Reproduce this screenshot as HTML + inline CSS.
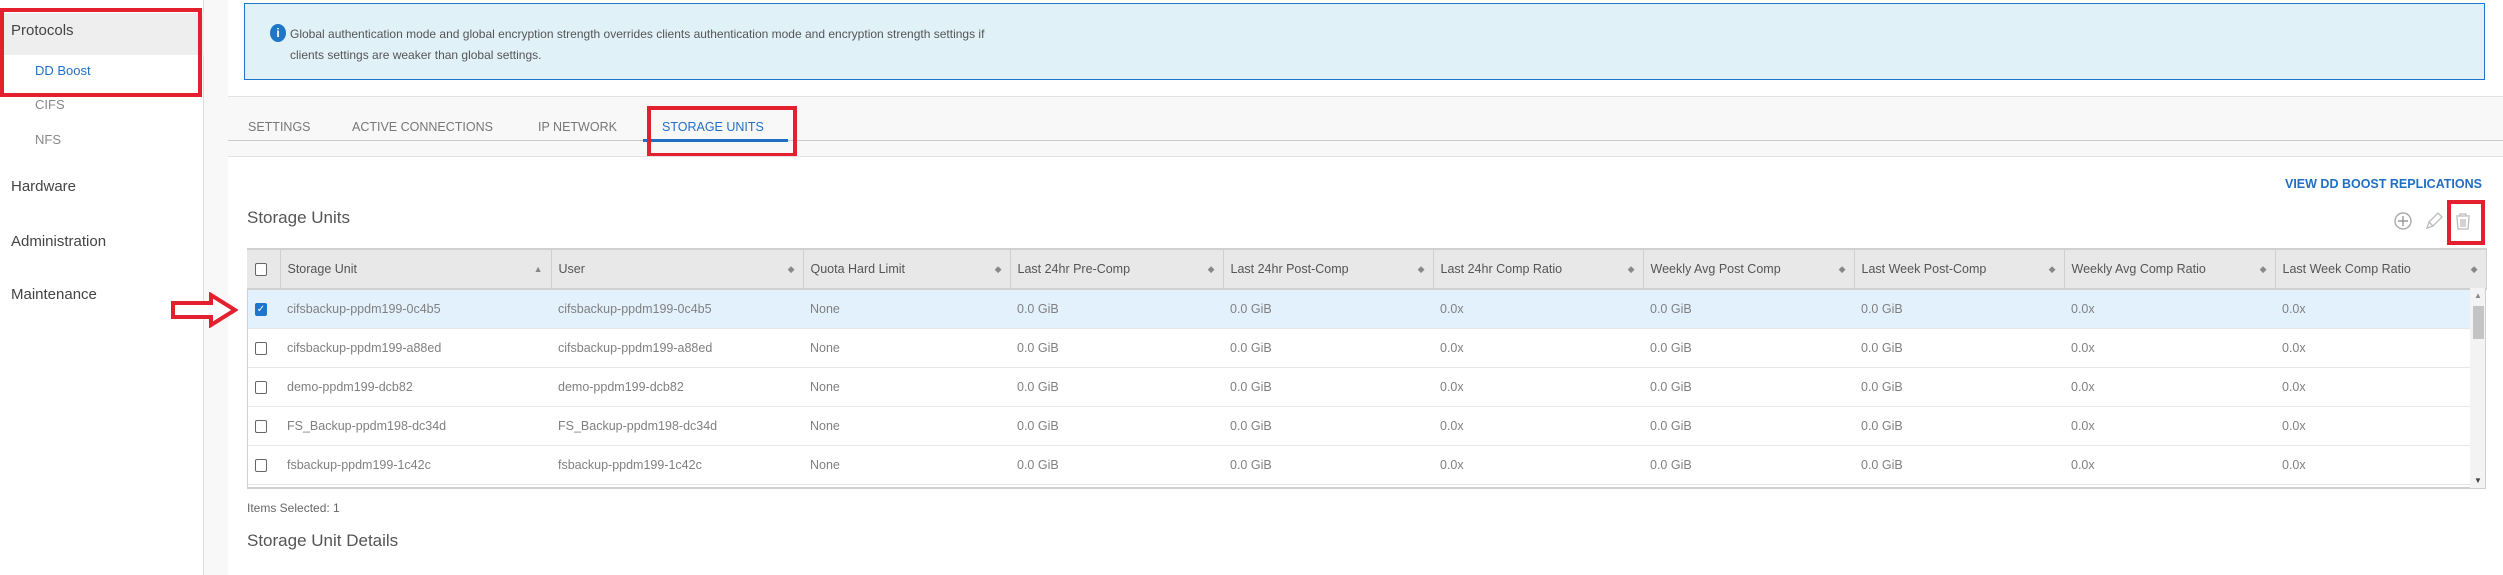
<!DOCTYPE html>
<html><head><meta charset="utf-8"><style>
*{box-sizing:border-box;margin:0;padding:0}
body{width:2503px;height:575px;overflow:hidden;background:#f8f8f8;font-family:"Liberation Sans",sans-serif;position:relative;color:#555}
.abs{position:absolute}
#side{left:0;top:0;width:204px;height:575px;background:#fff;border-right:1px solid #ddd}
.nav{position:absolute;font-size:15px;color:#444}
.sub{position:absolute;font-size:13px;color:#888}
.red{position:absolute;border:4px solid #e5202e}
#p1{left:228px;top:0;width:2275px;height:97px;background:#fff;border-bottom:1px solid #e2e2e2}
#info{left:244px;top:3px;width:2241px;height:77px;background:#e1f1f8;border:1.5px solid #1f75c8}
#info .t{position:absolute;left:45px;top:20px;font-size:12px;line-height:21px;color:#555}
.tab{position:absolute;top:120px;font-size:12.5px;color:#777}
#p2{left:228px;top:156px;width:2275px;height:419px;background:#fff;border-top:1px solid #e2e2e2}
table{position:absolute;left:247px;top:248px;border-collapse:collapse;table-layout:fixed;font-size:12.5px}
th{background:#e8e8e8;height:40px;text-align:left;font-weight:normal;color:#555;border-right:1.5px solid #d0d0d0;border-top:2px solid #d0d0d0;border-bottom:2px solid #d0d0d0;padding-left:7px;position:relative}
th .s{position:absolute;right:8px;top:14px;font-size:9px;color:#888}
td{height:39px;border-bottom:1.5px solid #e6e6e6;padding-left:7px;color:#808080}
tr.sel td{background:#e3f1fd}
.cb{display:inline-block;width:12px;height:13px;border:1.3px solid #666;border-radius:2px;vertical-align:middle;margin-left:8px;background:#fff}
.cb.on{background:#1f75c8;border-color:#1f75c8;color:#fff;font-size:10px;line-height:11px;text-align:center}
</style></head><body>
<div id="side" class="abs">
<div class="abs" style="left:0;top:13px;width:204px;height:42px;background:#eee"></div>
<div class="nav" style="left:11px;top:22px">Protocols</div>
<div class="sub" style="left:35px;top:63px;color:#1f6fc4">DD Boost</div>
<div class="sub" style="left:35px;top:97px">CIFS</div>
<div class="sub" style="left:35px;top:132px">NFS</div>
<div class="nav" style="left:11px;top:178px">Hardware</div>
<div class="nav" style="left:11px;top:233px">Administration</div>
<div class="nav" style="left:11px;top:286px">Maintenance</div>
</div>
<div class="red" style="left:0;top:8px;width:202px;height:89px"></div>
<div id="p1" class="abs"></div>
<div id="info" class="abs">
<div class="abs" style="left:25px;top:20px;width:16px;height:18px;border-radius:50%;background:#1f75c8;color:#fff;font-size:12px;font-weight:bold;text-align:center;line-height:18px">i</div>
<div class="t">Global authentication mode and global encryption strength overrides clients authentication mode and encryption strength settings if<br>clients settings are weaker than global settings.</div>
</div>
<div class="abs" style="left:228px;top:140px;width:2275px;height:1px;background:#ccc"></div>
<div class="tab" style="left:248px">SETTINGS</div>
<div class="tab" style="left:352px">ACTIVE CONNECTIONS</div>
<div class="tab" style="left:538px">IP NETWORK</div>
<div class="tab" style="left:662px;color:#1f6fc4">STORAGE UNITS</div>
<div class="abs" style="left:643px;top:139px;width:145px;height:3px;background:#1f6fc4"></div>
<div class="red" style="left:647px;top:106px;width:150px;height:51px"></div>
<div id="p2" class="abs"></div>
<div class="abs" style="right:21px;top:177px;font-size:12.5px;font-weight:bold;color:#1f6fc4">VIEW DD BOOST REPLICATIONS</div>
<div class="abs" style="left:247px;top:208px;font-size:17px;color:#555">Storage Units</div>
<svg class="abs" style="left:2394px;top:211px" width="90" height="20" viewBox="0 0 90 20"><circle cx="9" cy="10" r="8" fill="none" stroke="#aaa" stroke-width="1.4"/><path d="M9 5v10M4 10h10" stroke="#999" stroke-width="1.4"/><path d="M33 17l2-6 9-9 4 4-9 9z M35 11l4 4" fill="none" stroke="#bbb" stroke-width="1.3"/><path d="M62 5h14M66 5V3h6v2M63 6l1 12h10l1-12M67 8v8M69 8v8M71 8v8" fill="none" stroke="#bbb" stroke-width="1.3"/></svg>
<div class="red" style="left:2447px;top:200px;width:38px;height:45px"></div>
<table>
<colgroup><col style="width:33px"><col style="width:271px"><col style="width:252px"><col style="width:207px"><col style="width:213px"><col style="width:210px"><col style="width:210px"><col style="width:211px"><col style="width:210px"><col style="width:211px"><col style="width:211px"></colgroup>
<tr><th style="padding-left:0"><span class="cb"></span></th><th>Storage Unit<span class="s">▲</span></th><th>User<span class="s">◆</span></th><th>Quota Hard Limit<span class="s">◆</span></th><th>Last 24hr Pre-Comp<span class="s">◆</span></th><th>Last 24hr Post-Comp<span class="s">◆</span></th><th>Last 24hr Comp Ratio<span class="s">◆</span></th><th>Weekly Avg Post Comp<span class="s">◆</span></th><th>Last Week Post-Comp<span class="s">◆</span></th><th>Weekly Avg Comp Ratio<span class="s">◆</span></th><th>Last Week Comp Ratio<span class="s">◆</span></th></tr>
<tr class="sel"><td style="padding-left:0"><span class="cb on">✓</span></td><td>cifsbackup-ppdm199-0c4b5</td><td>cifsbackup-ppdm199-0c4b5</td><td>None</td><td>0.0 GiB</td><td>0.0 GiB</td><td>0.0x</td><td>0.0 GiB</td><td>0.0 GiB</td><td>0.0x</td><td>0.0x</td></tr>
<tr><td style="padding-left:0"><span class="cb"></span></td><td>cifsbackup-ppdm199-a88ed</td><td>cifsbackup-ppdm199-a88ed</td><td>None</td><td>0.0 GiB</td><td>0.0 GiB</td><td>0.0x</td><td>0.0 GiB</td><td>0.0 GiB</td><td>0.0x</td><td>0.0x</td></tr>
<tr><td style="padding-left:0"><span class="cb"></span></td><td>demo-ppdm199-dcb82</td><td>demo-ppdm199-dcb82</td><td>None</td><td>0.0 GiB</td><td>0.0 GiB</td><td>0.0x</td><td>0.0 GiB</td><td>0.0 GiB</td><td>0.0x</td><td>0.0x</td></tr>
<tr><td style="padding-left:0"><span class="cb"></span></td><td>FS_Backup-ppdm198-dc34d</td><td>FS_Backup-ppdm198-dc34d</td><td>None</td><td>0.0 GiB</td><td>0.0 GiB</td><td>0.0x</td><td>0.0 GiB</td><td>0.0 GiB</td><td>0.0x</td><td>0.0x</td></tr>
<tr><td style="padding-left:0"><span class="cb"></span></td><td>fsbackup-ppdm199-1c42c</td><td>fsbackup-ppdm199-1c42c</td><td>None</td><td>0.0 GiB</td><td>0.0 GiB</td><td>0.0x</td><td>0.0 GiB</td><td>0.0 GiB</td><td>0.0x</td><td>0.0x</td></tr>
</table>
<div class="abs" style="left:247px;top:288px;width:1px;height:200px;background:#d0d0d0"></div>
<div class="abs" style="left:247px;top:487px;width:2239px;height:1.5px;background:#d0d0d0"></div>
<div class="abs" style="left:2470px;top:288px;width:16px;height:200px;background:#f3f3f3;border-right:1px solid #d0d0d0"></div>
<div class="abs" style="left:2473px;top:306px;width:11px;height:33px;background:#c4c4c4"></div>
<div class="abs" style="left:2474px;top:291px;font-size:8px;color:#888">▲</div>
<div class="abs" style="left:2474px;top:476px;font-size:8px;color:#444">▼</div>
<div class="abs" style="left:247px;top:501px;font-size:12px;color:#666">Items Selected: 1</div>
<div class="abs" style="left:247px;top:531px;font-size:17px;color:#555">Storage Unit Details</div>
<svg class="abs" style="left:170px;top:292px" width="68" height="36" viewBox="0 0 68 36"><path d="M3 11h38V3l24 15-24 15v-8H3z" fill="#fff" stroke="#e5202e" stroke-width="4"/></svg>
</body></html>
